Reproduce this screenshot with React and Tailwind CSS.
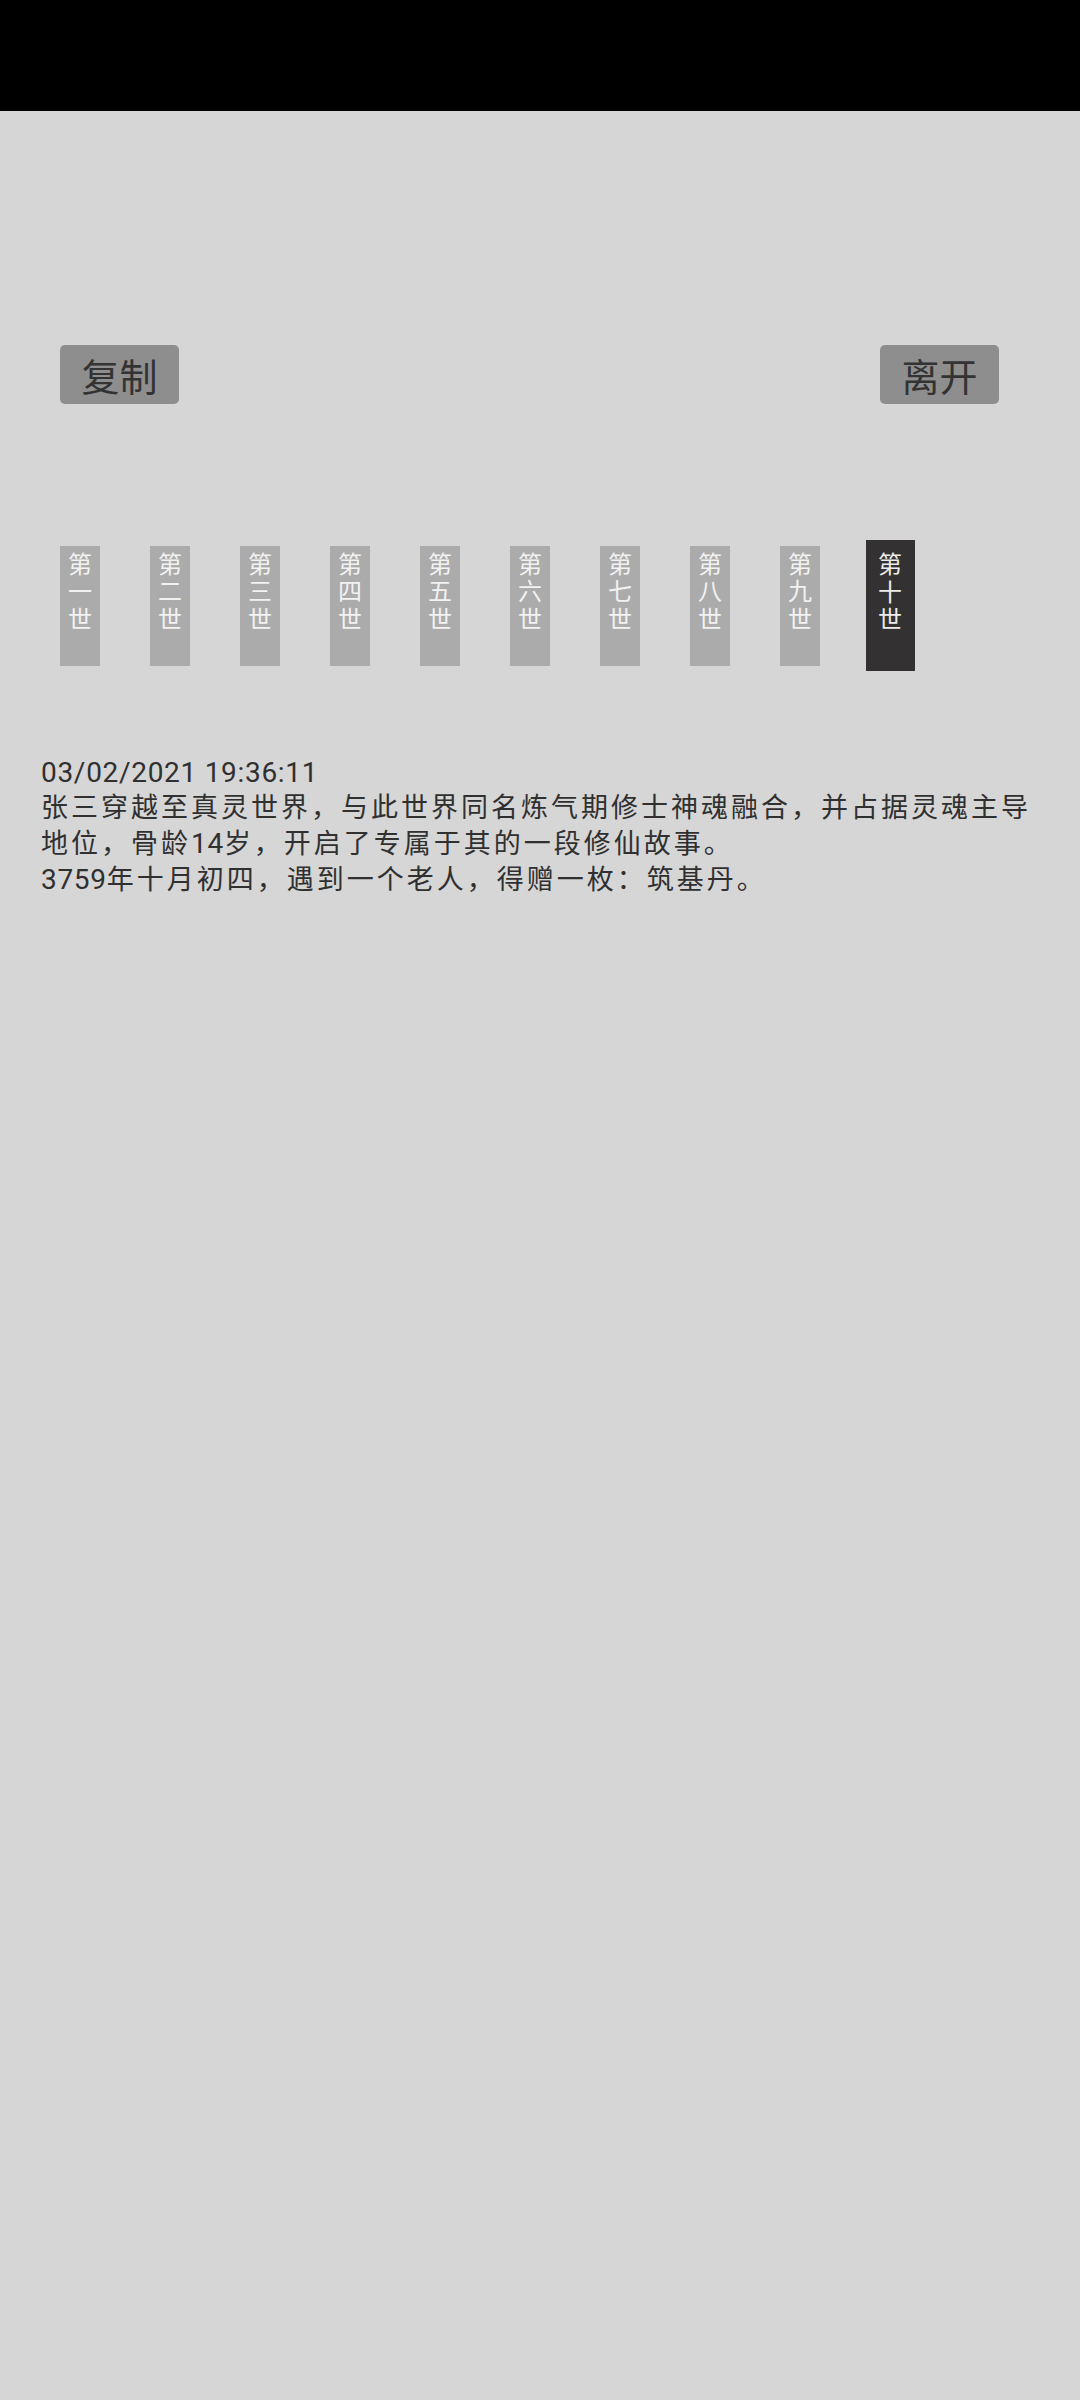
import React from "react";

const tabs = ["一", "二", "三", "四", "五", "六", "七", "八", "九", "十"];

function Latin({ children }) {
  return (
    <span className="tracking-[0.7px] text-[28px]" style={{ fontFamily: "Roboto, 'Liberation Sans', sans-serif" }}>
      {children}
    </span>
  );
}

export default function App() {
  return (
    <div
      className="w-[1080px] min-h-[2400px] bg-[#d6d6d6] flex flex-col"
      style={{ fontFamily: "'Noto Sans CJK SC', 'Noto Sans', sans-serif" }}
    >
      <div className="h-[111px] bg-black shrink-0" />

      <div className="mt-[234px] flex justify-between pl-[60px] pr-[81px]">
        <button className="w-[119px] h-[59px] rounded-[5px] bg-[#8e8e8e] text-[#333333] text-[38px] leading-[46px] flex items-center justify-center">
          复制
        </button>
        <button className="w-[119px] h-[59px] rounded-[5px] bg-[#8e8e8e] text-[#333333] text-[38px] leading-[46px] flex items-center justify-center">
          离开
        </button>
      </div>

      <div className="mt-[136px] h-[131px] flex items-center gap-[50px] pl-[60px]">
        {tabs.map((t, i) => {
          const active = i === 9;
          return (
            <div key={t} className="w-[40px] shrink-0 flex justify-center">
              {active ? (
                <div className="w-[49px] h-[131px] shrink-0 bg-[#333132] text-[#ececec] text-[24px] leading-[27.5px] text-center pt-[9px]">
                  第<br />
                  {t}
                  <br />世
                </div>
              ) : (
                <div className="w-[40px] h-[120px] shrink-0 bg-[#ababab] text-[#f2f2f2] text-[24px] leading-[27.5px] text-center pt-[3px]">
                  第<br />
                  {t}
                  <br />世
                </div>
              )}
            </div>
          );
        })}
      </div>

      <div
        className="mt-[84px] px-[41px] text-[27px] leading-[35px] text-[#303030] tracking-[3px]"
        style={{ fontFamily: "Roboto, 'Noto Sans CJK SC', sans-serif" }}
      >
        <div>
          <Latin>03/02/2021 19:36:11</Latin>
        </div>
        <div>
          张三穿越至真灵世界，与此世界同名炼气期修士神魂融合，并占据灵魂主导地位，骨龄<Latin>14</Latin>岁，开启了专属于其的一段修仙故事。
        </div>
        <div>
          <Latin>3759</Latin>年十月初四，遇到一个老人，得赠一枚：筑基丹。
        </div>
      </div>
    </div>
  );
}
